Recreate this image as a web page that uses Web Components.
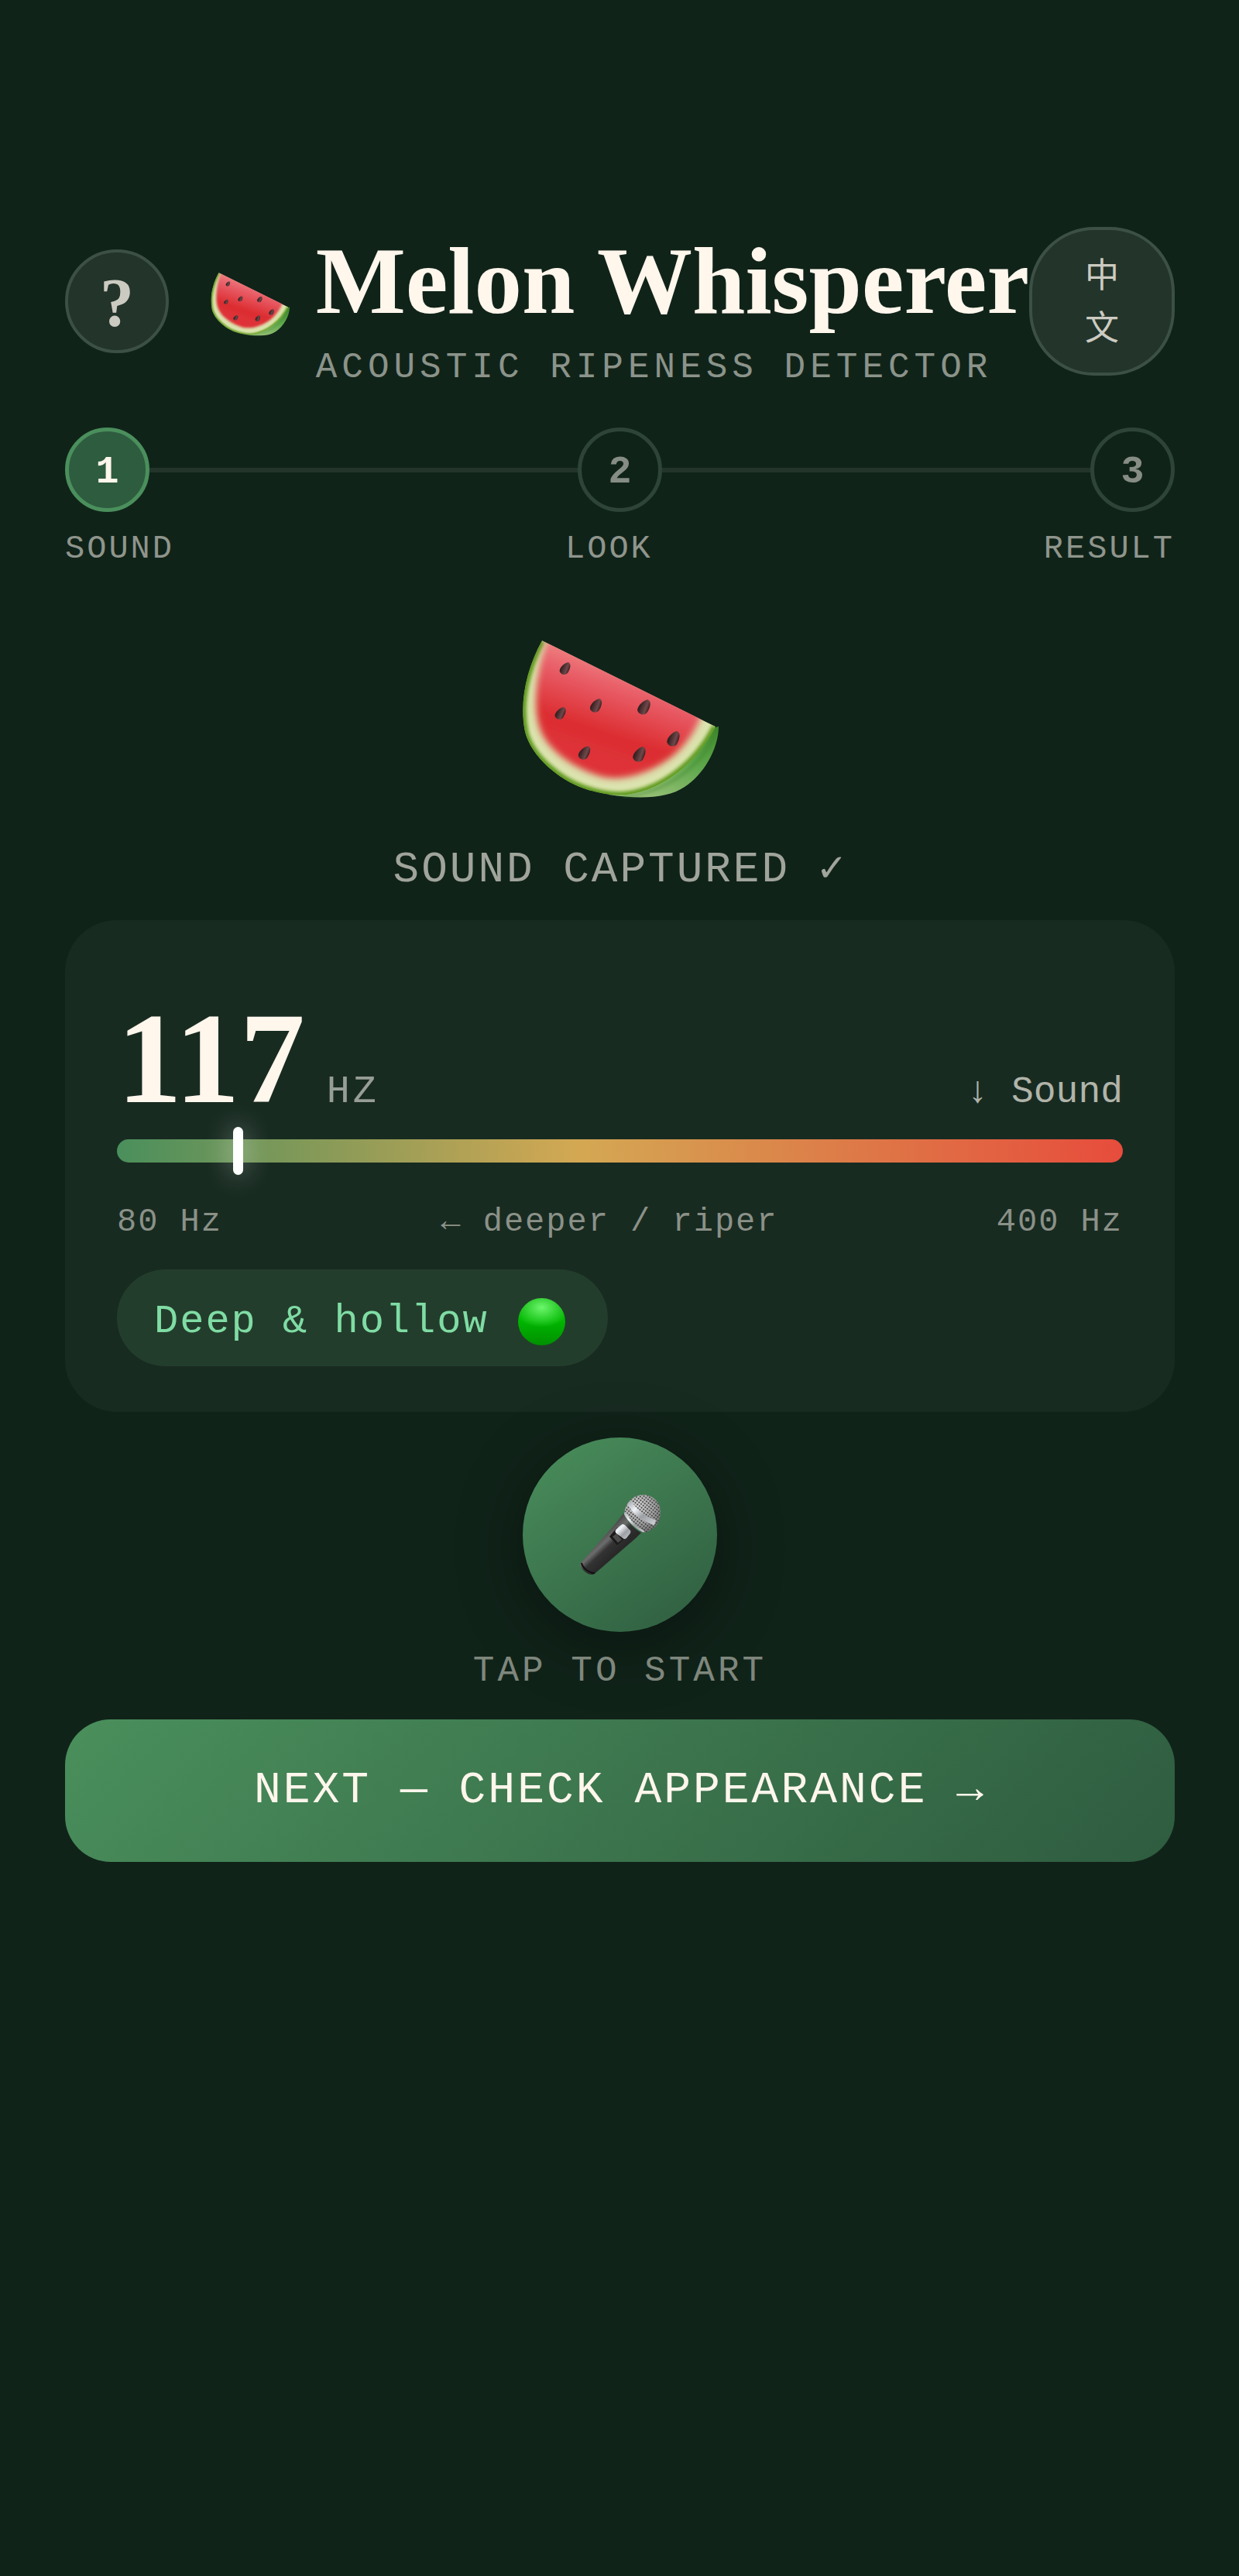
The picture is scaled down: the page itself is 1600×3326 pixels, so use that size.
<!DOCTYPE html>
<html lang="en">
<head>
<meta charset="UTF-8">
<meta name="viewport" content="width=device-width, initial-scale=1">
<title>Melon Whisperer</title>
<style>
  :root {
    --bg: #102319;
    --card: #182b21;
    --cream: #fff6ec;
    --green: #4a8f5c;
    --green-dark: #2e5c3f;
    --serif: "Liberation Serif", "Noto Sans CJK SC", serif;
    --mono: "Liberation Mono", "DejaVu Sans Mono", "Noto Sans CJK SC", monospace;
  }
  body {
    margin: 0;
    background: var(--bg);
    color: var(--cream);
    font-family: var(--mono);
  }
</style>
</head>
<body>
<melon-app></melon-app>

<script>
class MelonIcon extends HTMLElement {
  constructor() {
    super();
    this.attachShadow({ mode: "open" });
  }

  connectedCallback() {
    this.shadowRoot.innerHTML = `
      <style>
        :host { display: block; flex: none; }
        svg { display: block; width: 100%; }
      </style>
      <svg viewBox="0 -20 254 224" aria-hidden="true">
        <defs>
          <linearGradient id="skin" x1="1" y1="0" x2="0.4" y2="1">
            <stop offset="0" stop-color="#3f8a2c"/>
            <stop offset="0.5" stop-color="#5fa84c"/>
            <stop offset="1" stop-color="#94bf74"/>
          </linearGradient>
          <linearGradient id="flesh" x1="0.66" y1="0.16" x2="0.4" y2="0.85">
            <stop offset="0" stop-color="#f09a90"/>
            <stop offset="0.35" stop-color="#e9606a"/>
            <stop offset="0.8" stop-color="#dc2c30"/>
            <stop offset="1" stop-color="#de3238"/>
          </linearGradient>
          <linearGradient id="seed" x1="0" y1="0" x2="1" y2="0">
            <stop offset="0" stop-color="#2c1a1b"/>
            <stop offset="0.7" stop-color="#70484a"/>
            <stop offset="1" stop-color="#3c2022"/>
          </linearGradient>
          <path id="face" d="M26 0C6 36-4 80 4 118C12 150 48 180 80 191C100 198 120 201 136 199C182 193 226 158 250 111Z"/>
          <path id="pip" fill="url(#seed)" d="M1-9C6-8 6-1 5 4C4 9-4 10-6 5C-7 0-3-7 1-9Z"/>
          <clipPath id="cut"><use href="#face"/></clipPath>
          <filter id="soft" x="-10%" y="-10%" width="120%" height="120%"><feGaussianBlur stdDeviation="4"/></filter>
          <filter id="edge" x="-10%" y="-10%" width="120%" height="120%"><feGaussianBlur stdDeviation="2"/></filter>
        </defs>
        <path fill="url(#skin)" d="M254 111C254 140 234 174 210 189C188 204 152 205 112 199L126 190L230 118Z"/>
        <path fill="none" stroke="#2f7420" stroke-width="3" opacity="0.4" filter="url(#edge)" d="M252 113C238 158 190 196 130 202"/>
        <g clip-path="url(#cut)">
          <use href="#face" fill="#dbe3ae"/>
          <path fill="none" stroke="#5e9a1e" stroke-width="9" filter="url(#edge)" d="M26 0C6 36-4 80 4 118C12 150 48 180 80 191C100 198 120 201 136 199C182 193 226 158 250 111"/>
          <path fill="url(#flesh)" filter="url(#soft)" d="M36 -10C20 30 12 84 24 116C36 146 74 168 104 176C140 184 186 162 208 136C220 122 226 112 234 92Z"/>
        </g>
        <use href="#pip" transform="translate(56 36) rotate(20)"/>
        <use href="#pip" transform="translate(50 94) rotate(22)"/>
        <use href="#pip" transform="translate(96 84) rotate(20) scale(1.1)"/>
        <use href="#pip" transform="translate(158 86) rotate(20) scale(1.2)"/>
        <use href="#pip" transform="translate(196 127) rotate(18) scale(1.2)"/>
        <use href="#pip" transform="translate(81 145) rotate(22) scale(1.1)"/>
        <use href="#pip" transform="translate(152 147) rotate(18) scale(1.2)"/>
      </svg>
    `;
  }
}

class MicIcon extends HTMLElement {
  constructor() {
    super();
    this.attachShadow({ mode: "open" });
  }

  connectedCallback() {
    this.shadowRoot.innerHTML = `
      <style>
        :host { display: block; width: 104px; }
        svg { display: block; width: 100%; }
      </style>
      <svg viewBox="0 0 104 104" aria-hidden="true">
        <defs>
          <linearGradient id="body" x1="0.35" y1="0.35" x2="0.6" y2="0.62">
            <stop offset="0" stop-color="#4a4a4a"/>
            <stop offset="0.35" stop-color="#6c6c6c"/>
            <stop offset="0.6" stop-color="#333"/>
            <stop offset="1" stop-color="#292929"/>
          </linearGradient>
          <linearGradient id="ring" x1="0" y1="0" x2="1" y2="1">
            <stop offset="0" stop-color="#a9adb2"/>
            <stop offset="0.3" stop-color="#f0f4f8"/>
            <stop offset="0.6" stop-color="#9ca0a4"/>
            <stop offset="1" stop-color="#c9ccd0"/>
          </linearGradient>
          <radialGradient id="ball" cx="0.4" cy="0.3" r="0.75">
            <stop offset="0" stop-color="#dcdcdc"/>
            <stop offset="0.6" stop-color="#a6a6a6"/>
            <stop offset="1" stop-color="#6c6c6c"/>
          </radialGradient>
          <pattern id="mesh" width="3.4" height="3.4" patternUnits="userSpaceOnUse" patternTransform="rotate(38)">
            <rect x="0.6" y="0.6" width="1.8" height="1.8" fill="#333"/>
          </pattern>
          <clipPath id="head"><path d="M58 19C61 8 70 0 82 0C94 0 104 10 104 22C104 36 96 46 83 49C73 45 62 35 57 25Z"/></clipPath>
        </defs>
        <path fill="url(#body)" d="M56 24C62 36 70 44 79 49L72 56L20 101C18 104 11 104 6 99C1 95-1 91 1 88L45 38Z"/>
        <path fill="none" stroke="#111" stroke-width="2" d="M2 88C3 94 11 101 19 101"/>
        <g clip-path="url(#head)">
          <rect x="54" width="50" height="50" fill="url(#ball)"/>
          <rect x="54" width="50" height="50" fill="url(#mesh)"/>
          <path fill="none" stroke="url(#ring)" stroke-width="7" d="M63 9C70 21 82 31 97 36"/>
          <path fill="none" stroke="url(#ring)" stroke-width="5" d="M57 23C62 34 70 43 82 49"/>
        </g>
        <path fill="#191919" d="M38 54L48 42L60 54L48 65Z"/>
        <path fill="#4b4b4b" d="M42 54L47 50L54 58L49 62Z"/>
        <path fill="url(#ring)" d="M53 39C55 37 57 38 59 40L65 46C66 48 65 50 63 52L60 56C58 58 56 57 54 55L47 50C45 48 45 46 47 44Z"/>
      </svg>
    `;
  }
}

class AppHeader extends HTMLElement {
  constructor() {
    super();
    this.attachShadow({ mode: "open" });
  }

  connectedCallback() {
    this.shadowRoot.innerHTML = `
      <style>
        :host { display: block; }
        header {
          display: flex;
          align-items: center;
          justify-content: space-between;
        }
        button {
          box-sizing: border-box;
          flex: none;
          padding: 0;
          border: 4px solid #3c5045;
          background: #23342a;
          color: #cccbc1;
          cursor: pointer;
        }
        .help {
          width: 134px;
          height: 134px;
          padding-top: 4px;
          border-radius: 50%;
          font: bold 88px/1 var(--serif);
        }
        .lang {
          width: 188px;
          padding: 28px 68px 20px;
          border-radius: 84px;
          font: 44px/68px var(--mono);
        }
        .brand {
          display: flex;
          align-items: center;
          gap: 34px;
          margin-left: auto;
        }
        melon-icon { width: 102px; }
        .text {
          display: flex;
          flex-direction: column;
          gap: 33px;
          white-space: nowrap;
        }
        h1 {
          margin: 0;
          font: bold 123px/138px var(--serif);
        }
        p {
          margin: 0;
          font-size: 46px;
          line-height: 20px;
          letter-spacing: 6px;
          color: #8b938a;
        }
      </style>
      <header>
        <button class="help" aria-label="Help">?</button>
        <div class="brand">
          <melon-icon></melon-icon>
          <div class="text">
            <h1><slot name="title"></slot></h1>
            <p><slot name="tagline"></slot></p>
          </div>
        </div>
        <button class="lang" lang="zh">中文</button>
      </header>
    `;
  }
}

class StepTracker extends HTMLElement {
  constructor() {
    super();
    this.attachShadow({ mode: "open" });
  }

  connectedCallback() {
    const steps = this.getAttribute("data-steps").split(",");
    const current = Number(this.getAttribute("data-current") || 1);

    this.shadowRoot.innerHTML = `
      <style>
        :host { display: block; }
        .dots {
          display: flex;
          align-items: center;
        }
        .dot {
          box-sizing: border-box;
          display: flex;
          align-items: center;
          justify-content: center;
          flex: none;
          width: 109px;
          height: 109px;
          padding-top: 6px;
          border: 5px solid #2f4439;
          border-radius: 50%;
          font-size: 50px;
          font-weight: bold;
          color: #868d84;
        }
        .dot.active {
          border-color: var(--green);
          background: var(--green-dark);
          color: var(--cream);
        }
        .line {
          flex: 1;
          height: 6px;
          background: #23352b;
        }
        .labels {
          display: flex;
          justify-content: space-between;
          margin-top: 25px;
          font-size: 42px;
          line-height: 46px;
          letter-spacing: 3px;
          color: #8f958c;
        }
      </style>
      <div class="dots">
        ${steps.map((step, i) => `<span class="dot ${i + 1 === current ? "active" : ""}">${i + 1}</span>`).join(`<span class="line"></span>`)}
      </div>
      <div class="labels">
        ${steps.map((step) => `<span>${step}</span>`).join("")}
      </div>
    `;
  }
}

class FrequencyCard extends HTMLElement {
  constructor() {
    super();
    this.attachShadow({ mode: "open" });
  }

  connectedCallback() {
    const hz = Number(this.getAttribute("data-hz"));
    const min = Number(this.getAttribute("data-min"));
    const max = Number(this.getAttribute("data-max"));
    const position = ((hz - min) / (max - min)) * 100;

    this.shadowRoot.innerHTML = `
      <style>
        :host {
          display: block;
          padding: 100px 67px 59px;
          border-radius: 67px;
          background: var(--card);
        }
        .reading {
          display: flex;
          align-items: baseline;
        }
        .value {
          font: bold 168px/156px var(--serif);
        }
        .unit {
          margin-left: 28px;
          font-size: 50px;
          line-height: 50px;
          letter-spacing: 4px;
          color: #979e96;
        }
        .trend {
          margin-left: auto;
          font-size: 48px;
          line-height: 50px;
          white-space: pre;
          color: #b1b4aa;
        }
        .bar {
          position: relative;
          height: 30px;
          margin-top: 27px;
          border-radius: 15px;
          background: linear-gradient(90deg, #4a8f5c, #d4a853 46%, #e74c3c);
        }
        .marker {
          position: absolute;
          top: -16px;
          bottom: -16px;
          left: ${position}%;
          width: 13px;
          border-radius: 8px;
          background: #fff;
          box-shadow: 0 0 34px rgba(255, 255, 255, 0.5);
        }
        .scale {
          display: flex;
          justify-content: space-between;
          margin-top: 54px;
          font-size: 42px;
          line-height: 46px;
          letter-spacing: 2px;
          color: #8b9188;
        }
        .verdict {
          box-sizing: border-box;
          display: inline-flex;
          align-items: center;
          gap: 38px;
          height: 125px;
          margin-top: 38px;
          padding: 10px 55px 0 48px;
          border-radius: 63px;
          background: #233d2c;
          font-size: 52px;
          letter-spacing: 2px;
          color: #7fdca4;
        }
        .light {
          width: 61px;
          height: 61px;
          border-radius: 50%;
          background:
            radial-gradient(ellipse 60% 42% at 50% 20%, rgba(120, 255, 120, 0.9), rgba(60, 230, 60, 0) 100%),
            linear-gradient(#00a800, #00b800 45%, #009000);
        }
      </style>
      <div class="reading">
        <span class="value">${hz}</span>
        <span class="unit">HZ</span>
        <span class="trend"><slot name="trend"></slot></span>
      </div>
      <div class="bar"><span class="marker"></span></div>
      <div class="scale">
        <span>${min} Hz</span>
        <span><slot name="hint"></slot></span>
        <span>${max} Hz</span>
      </div>
      <div class="verdict">
        <span><slot name="verdict"></slot></span>
        <span class="light"></span>
      </div>
    `;
  }
}

class RecordButton extends HTMLElement {
  constructor() {
    super();
    this.attachShadow({ mode: "open" });
  }

  connectedCallback() {
    this.shadowRoot.innerHTML = `
      <style>
        :host {
          display: flex;
          flex-direction: column;
          align-items: center;
          gap: 26px;
        }
        button {
          display: flex;
          align-items: center;
          justify-content: center;
          width: 251px;
          height: 251px;
          padding: 0;
          border: 0;
          border-radius: 50%;
          background: linear-gradient(145deg, #4a8f5c, #2e5c3f);
          box-shadow: 0 16px 84px rgba(0, 0, 0, 0.4);
          cursor: pointer;
        }
        label {
          font-size: 46px;
          line-height: 50px;
          letter-spacing: 4px;
          color: #7f877d;
        }
      </style>
      <button id="record"><mic-icon></mic-icon></button>
      <label for="record"><slot></slot></label>
    `;
  }
}

class NextButton extends HTMLElement {
  constructor() {
    super();
    this.attachShadow({ mode: "open" });
  }

  connectedCallback() {
    this.shadowRoot.innerHTML = `
      <style>
        :host { display: block; }
        button {
          width: 100%;
          padding: 57px 40px;
          border: 0;
          border-radius: 59px;
          background: linear-gradient(135deg, #4a8f5c, #2e5c3f);
          color: var(--cream);
          font: 58px/70px var(--mono);
          letter-spacing: 3px;
          cursor: pointer;
        }
      </style>
      <button><slot></slot></button>
    `;
  }
}

class MelonApp extends HTMLElement {
  constructor() {
    super();
    this.attachShadow({ mode: "open" });
  }

  connectedCallback() {
    this.shadowRoot.innerHTML = `
      <style>
        :host {
          display: block;
          box-sizing: border-box;
          min-height: 100vh;
          padding: 293px 83px 84px 84px;
        }
        main {
          display: flex;
          flex-direction: column;
        }
        step-tracker { margin-top: 67px; }
        .hero {
          width: 254px;
          margin: 75px auto 0;
        }
        .status {
          margin: 61px 0 34px;
          font-size: 56px;
          line-height: 62px;
          letter-spacing: 3px;
          text-align: center;
          color: #a0a49b;
        }
        record-button { margin-top: 33px; }
        next-button { margin-top: 37px; }
      </style>
      <app-header>
        <span slot="title">Melon Whisperer</span>
        <span slot="tagline">ACOUSTIC RIPENESS DETECTOR</span>
      </app-header>
      <main>
        <step-tracker data-steps="SOUND,LOOK,RESULT" data-current="1"></step-tracker>
        <melon-icon class="hero"></melon-icon>
        <p class="status">SOUND CAPTURED ✓</p>
        <frequency-card data-hz="117" data-min="80" data-max="400">
          <span slot="trend">↓ Sound</span>
          <span slot="hint">← deeper / riper</span>
          <span slot="verdict">Deep &amp; hollow</span>
        </frequency-card>
        <record-button>TAP TO START</record-button>
        <next-button>NEXT — CHECK APPEARANCE →</next-button>
      </main>
    `;
  }
}

customElements.define("melon-icon", MelonIcon);
customElements.define("mic-icon", MicIcon);
customElements.define("app-header", AppHeader);
customElements.define("step-tracker", StepTracker);
customElements.define("frequency-card", FrequencyCard);
customElements.define("record-button", RecordButton);
customElements.define("next-button", NextButton);
customElements.define("melon-app", MelonApp);
</script>
</body>
</html>
